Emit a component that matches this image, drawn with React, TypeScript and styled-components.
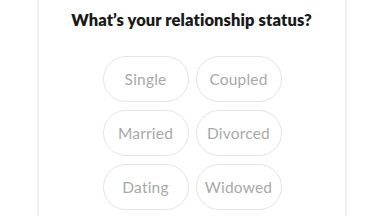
import React, { FC } from "react";
import styled, { createGlobalStyle } from "styled-components";

const GlobalStyle = createGlobalStyle`
  html, body {
    margin: 0;
    padding: 0;
    background: #ffffff;
    overflow: hidden;
  }
  body {
    font-family: "Lato", "Noto Sans", sans-serif;
  }
`;

const Page = styled.div`
  display: flex;
  justify-content: center;
  width: 384px;
  height: 216px;
`;

const Card = styled.div`
  width: 306px;
  height: 206px;
  margin-left: -1px;
  border-left: 2px solid #efefef;
  border-right: 2px solid #efefef;
  display: flex;
  flex-direction: column;
  align-items: center;
  padding-top: 10px;
  box-sizing: content-box;
`;

const Title = styled.h1`
  margin: 0;
  font-family: "Lato", sans-serif;
  font-weight: 800;
  font-size: 16.5px;
  line-height: 20px;
  color: #1a1a1a;
  letter-spacing: 0.1px;
`;

const Options = styled.div`
  display: grid;
  grid-template-columns: repeat(2, 86px);
  grid-auto-rows: 46px;
  column-gap: 7px;
  row-gap: 8px;
  margin-top: 26px;
  margin-left: 1px;
`;

const Option = styled.button<{ selected?: boolean }>`
  border: 1px solid ${({ selected }) => (selected ? "#999" : "#e4e4e4")};
  border-radius: 23px;
  background: #fff;
  font-family: "Lato", sans-serif;
  font-weight: 400;
  font-size: 15.5px;
  color: #a9a9a9;
  padding: 0;
  cursor: pointer;
  letter-spacing: 0.2px;
`;

const statuses = ["Single", "Coupled", "Married", "Divorced", "Dating", "Widowed"];

const App: FC = () => {
  return (
    <>
      <GlobalStyle />
      <Page>
        <Card>
          <Title>What’s your relationship status?</Title>
          <Options>
            {statuses.map((s) => (
              <Option key={s}>{s}</Option>
            ))}
          </Options>
        </Card>
      </Page>
    </>
  );
};

export default App;
